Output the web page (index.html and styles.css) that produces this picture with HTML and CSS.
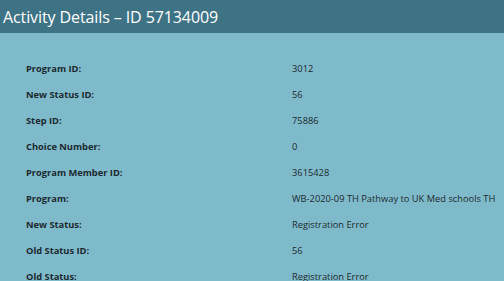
FILE: index.html
```html
<!DOCTYPE html>
<html>
<head>
<meta charset="utf-8">
<link rel="stylesheet" href="styles.css">
</head>
<body>
<div class="header"><h1 class="title">Activity Details – ID 57134009</h1></div>
<div class="details">
  <div class="label">Program ID:</div><div class="value">3012</div>
  <div class="label">New Status ID:</div><div class="value">56</div>
  <div class="label">Step ID:</div><div class="value">75886</div>
  <div class="label">Choice Number:</div><div class="value">0</div>
  <div class="label">Program Member ID:</div><div class="value">3615428</div>
  <div class="label">Program:</div><div class="value">WB-2020-09 TH Pathway to UK Med schools TH</div>
  <div class="label">New Status:</div><div class="value">Registration Error</div>
  <div class="label">Old Status ID:</div><div class="value">56</div>
  <div class="label">Old Status:</div><div class="value">Registration Error</div>
</div>
</body>
</html>
```
FILE: styles.css
```css
html, body {
  margin: 0;
  padding: 0;
  background: #7fbaca;
  font-family: "Open Sans", sans-serif;
  overflow: hidden;
}
.header {
  background: #3e7386;
  height: 33px;
  display: flex;
  align-items: center;
  padding-left: 3px;
}
.title {
  margin: 0;
  font-size: 16px;
  font-weight: 400;
  color: #ffffff;
  letter-spacing: -0.1px;
}
.details {
  display: grid;
  grid-template-columns: 266px minmax(0, 1fr);
  grid-auto-rows: 26px;
  padding: 22px 0 0 26px;
  color: #1b2a30;
  font-size: 9.3px;
  align-items: center;
}
.label {
  font-weight: 700;
}
.value {
  font-weight: 400;
  white-space: nowrap;
}
```
